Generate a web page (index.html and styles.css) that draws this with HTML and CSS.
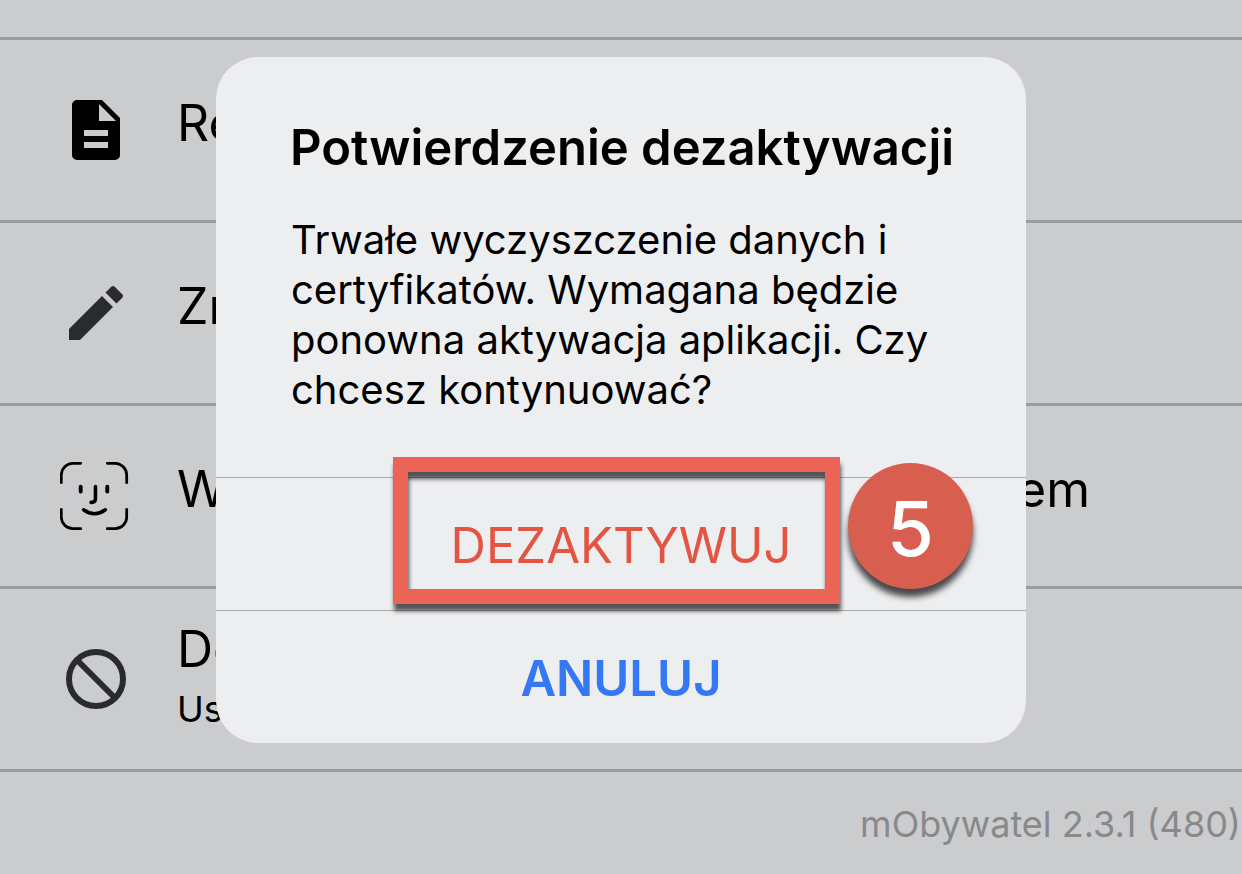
FILE: index.html
```html
<!DOCTYPE html>
<html lang="pl">
<head>
<meta charset="utf-8">
<title>mObywatel</title>
<link rel="stylesheet" href="styles.css">
</head>
<body>
<main class="screen">
  <ul class="settings">
    <li class="row">
      <svg class="icon" viewBox="0 0 72 72" aria-hidden="true"><path fill="#000" fill-rule="evenodd" d="M17 6h25l18 18v37a5 5 0 0 1-5 5H17a5 5 0 0 1-5-5V11a5 5 0 0 1 5-5zM39 10v17h17zM24 36h24v6H24zM24 48h24v6H24z"/></svg>
      <span class="label">Re</span>
    </li>
    <li class="row">
      <svg class="icon" viewBox="0 0 72 72" aria-hidden="true"><path fill="#2a2b2d" d="M9 52 42 19 53 30 20 63H9zM45.500 15.500 51 10q2-2 4 0l7 7q2 2 0 4l-5.500 5.500z"/></svg>
      <span class="label">Zm</span>
    </li>
    <li class="row">
      <svg class="icon" viewBox="0 0 72 72" aria-hidden="true"><g transform="translate(0 2) scale(.985)" fill="none" stroke="#000" stroke-width="2.800" stroke-linecap="round"><path d="M1.300 21V13A12 12 0 0 1 13 1.300h8M48 1.300h8A12 12 0 0 1 67.700 13v8M67.700 48v8A12 12 0 0 1 56 67.700h-8M21 67.700h-8A12 12 0 0 1 1.300 56v-8"/><path stroke-width="4" d="M21 25v5M48 25v5"/><path stroke-width="3.600" d="M36 25v12q0 4-4 4h-.500M24 48.500q11 8 22 0"/></g></svg>
      <span class="label">W</span>
      <span class="label label-end">em</span>
    </li>
    <li class="row">
      <svg class="icon" viewBox="0 0 72 72" aria-hidden="true"><g fill="none" stroke="#2a2b2d" stroke-width="6"><circle cx="36" cy="36" r="27"/><path d="M17 17 55 55"/></g></svg>
      <span class="label label-stacked">De<small class="hint">Us</small></span>
    </li>
  </ul>
  <footer class="version">mObywatel 2.3.1 (480)</footer>
  <div class="overlay">
    <section class="dialog" role="alertdialog" aria-labelledby="title" aria-describedby="message">
      <div class="content">
        <h1 class="title" id="title">Potwierdzenie dezaktywacji</h1>
        <p class="message" id="message">Trwałe wyczyszczenie danych i certyfikatów. Wymagana będzie ponowna aktywacja aplikacji. Czy chcesz kontynuować?</p>
      </div>
      <div class="choice">
        <button class="action danger" type="button">DEZAKTYWUJ</button>
        <span class="frame"></span>
        <span class="step">5</span>
      </div>
      <button class="action cancel" type="button">ANULUJ</button>
    </section>
  </div>
</main>
</body>
</html>
```
FILE: styles.css
```css
* {
  box-sizing: border-box;
}

body {
  margin: 0;
  background: #cbccce;
  color: #000;
  font-family: Inter, "Liberation Sans", sans-serif;
}

.screen {
  position: relative;
  min-height: 100vh;
  overflow: hidden;
}

.settings {
  margin: 0;
  padding: 37px 0 0;
  list-style: none;
}

.row {
  display: flex;
  align-items: center;
  gap: 45px;
  height: 183px;
  padding-left: 60px;
  border-top: 3px solid #9a9b9d;
}

.row:last-child {
  height: 186px;
  border-bottom: 3px solid #9a9b9d;
}

.icon {
  flex: none;
  width: 72px;
  height: 72px;
}

.label {
  padding-bottom: 14px;
  font-size: 50px;
  line-height: 60px;
  white-space: nowrap;
}

.label-end {
  margin-left: auto;
  padding-right: 152px;
}

.label-stacked {
  padding-bottom: 0;
}

.hint {
  display: block;
  font-size: 36px;
}

.version {
  padding: 30px 1px 0 0;
  color: #88898b;
  font-size: 36px;
  line-height: 44px;
  text-align: right;
}

.overlay {
  position: absolute;
  inset: 0;
  display: flex;
  justify-content: center;
  align-items: flex-start;
  padding-top: 57px;
}

.dialog {
  width: 810px;
  border-radius: 42px;
  background: #edeef0;
}

.content {
  padding: 61px 60px 62px 74px;
}

.title {
  margin: 0 0 37px;
  font-size: 49px;
  font-weight: 600;
  line-height: 60px;
  white-space: nowrap;
}

.message {
  margin: 0;
  padding-left: 1px;
  font-size: 40px;
  line-height: 50px;
}

.choice {
  position: relative;
}

.action {
  display: block;
  width: 100%;
  height: 133px;
  padding: 2px 0 0;
  border: 0;
  border-top: 1px solid #a9aaac;
  background: none;
  font-family: inherit;
  font-size: 49px;
}

.danger {
  color: #e45442;
}

.cancel {
  color: #3478f6;
  font-weight: 600;
}

.frame {
  position: absolute;
  top: -20px;
  left: 177px;
  width: 447px;
  height: 147px;
  border: 15px solid #ec6455;
  filter: drop-shadow(1px 7px 2px rgba(0, 0, 0, 0.65));
  pointer-events: none;
}

.step {
  position: absolute;
  top: -14px;
  left: 632px;
  width: 125px;
  height: 126px;
  border-radius: 50%;
  background: #d85f4f;
  box-shadow: 0 8px 6px rgba(0, 0, 0, 0.7);
  color: #fff;
  font-size: 76px;
  font-weight: 500;
  line-height: 130px;
  text-align: center;
}
```
